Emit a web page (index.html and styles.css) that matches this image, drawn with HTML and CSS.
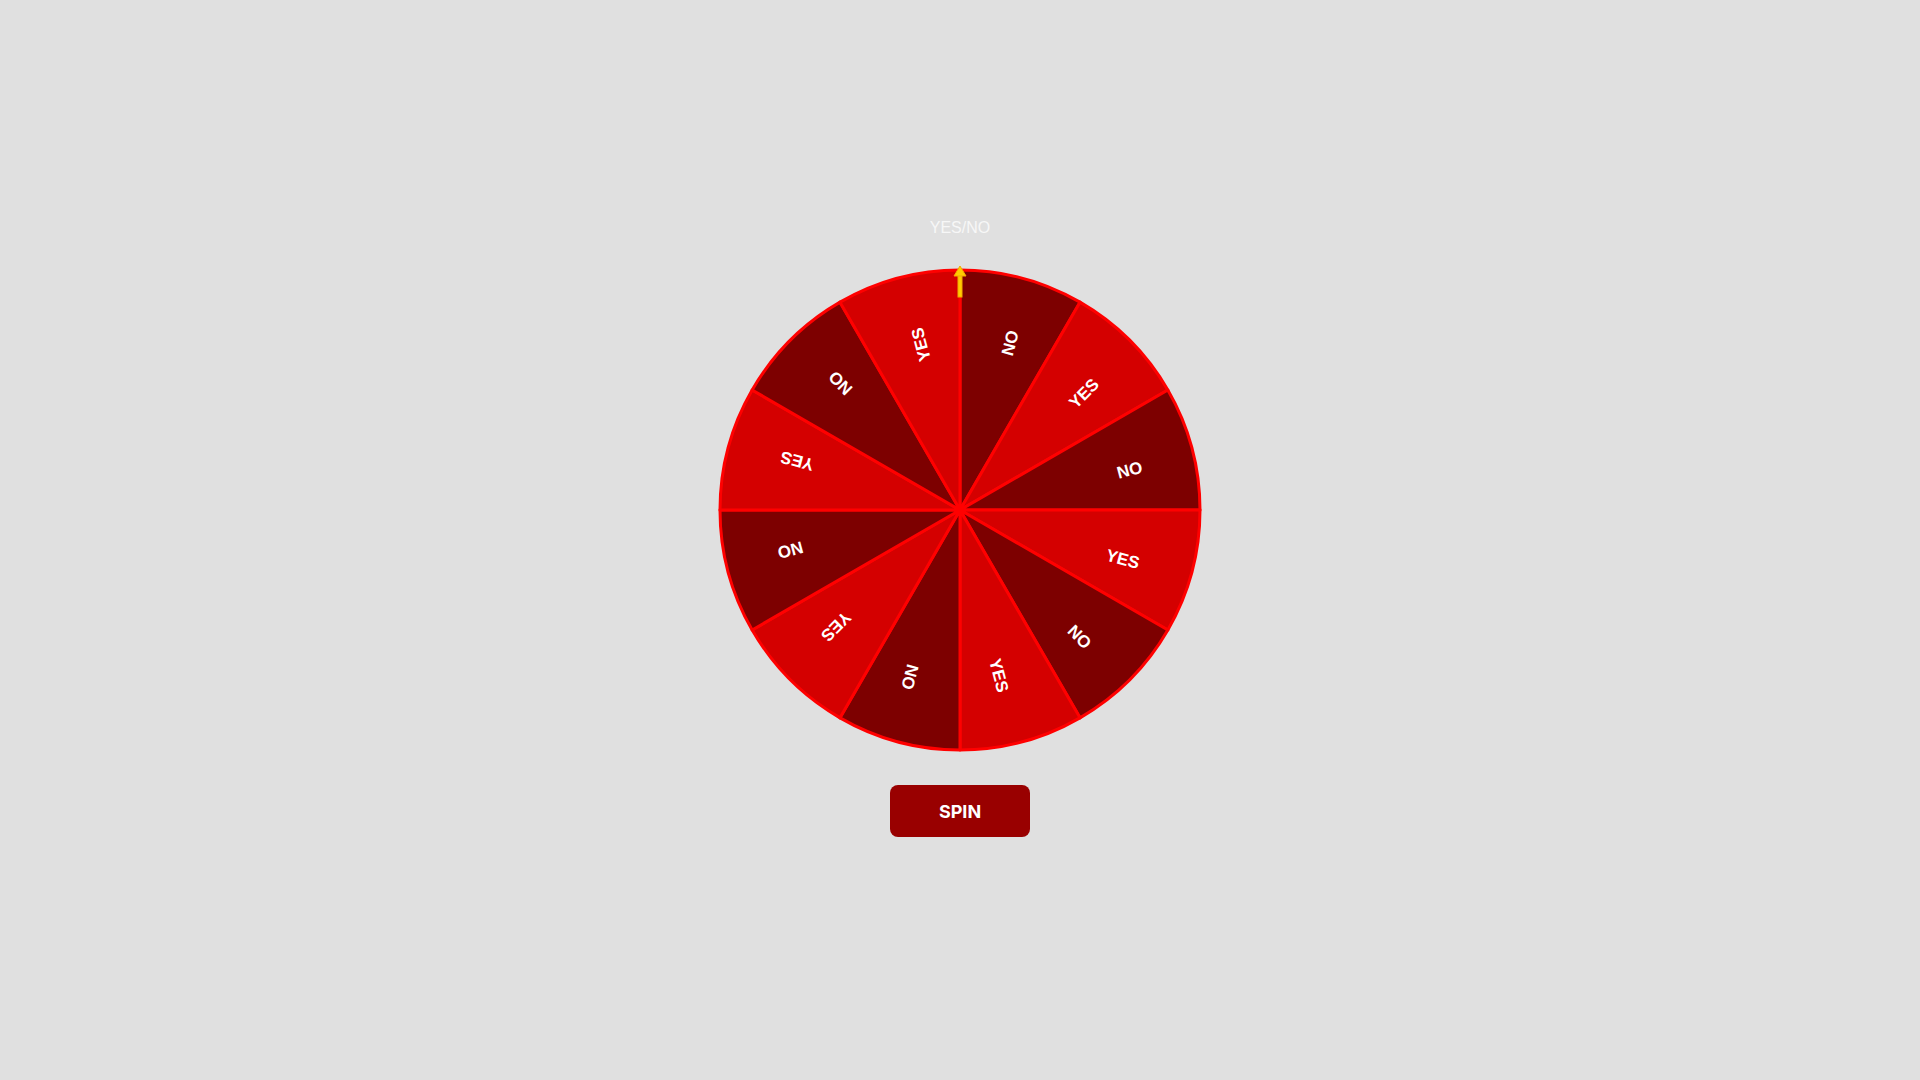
FILE: index.html
```
<!DOCTYPE html>
<html lang="en">

<head>
  <meta charset="UTF-8">
  <meta name="viewport" content="width=device-width, initial-scale=1.0">
  <title>Yes or No Wheel</title>
  <link rel="stylesheet" href="styles.css">
</head>

<body>
  <main class="app">
    <h1 class="title">YES/NO</h1>

    <!-- Roda: 12 fatias de 30 graus, centro em (245,245), raio 240 -->
    <svg class="wheel" width="490" height="490" viewBox="0 0 490 490">
      <g class="slices">
        <path class="dark" d="M245,245 L245,5 A240,240 0 0 1 365,37.15 Z" />
        <path class="light" d="M245,245 L365,37.15 A240,240 0 0 1 452.85,125 Z" />
        <path class="dark" d="M245,245 L452.85,125 A240,240 0 0 1 485,245 Z" />
        <path class="light" d="M245,245 L485,245 A240,240 0 0 1 452.85,365 Z" />
        <path class="dark" d="M245,245 L452.85,365 A240,240 0 0 1 365,452.85 Z" />
        <path class="light" d="M245,245 L365,452.85 A240,240 0 0 1 245,485 Z" />
        <path class="dark" d="M245,245 L245,485 A240,240 0 0 1 125,452.85 Z" />
        <path class="light" d="M245,245 L125,452.85 A240,240 0 0 1 37.15,365 Z" />
        <path class="dark" d="M245,245 L37.15,365 A240,240 0 0 1 5,245 Z" />
        <path class="light" d="M245,245 L5,245 A240,240 0 0 1 37.15,125 Z" />
        <path class="dark" d="M245,245 L37.15,125 A240,240 0 0 1 125,37.15 Z" />
        <path class="light" d="M245,245 L125,37.15 A240,240 0 0 1 245,5 Z" />
      </g>
      <g class="labels">
        <text x="432" y="256" transform="rotate(-75 245 245)">NO</text>
        <text x="432" y="256" transform="rotate(-45 245 245)">YES</text>
        <text x="432" y="256" transform="rotate(-15 245 245)">NO</text>
        <text x="432" y="256" transform="rotate(15 245 245)">YES</text>
        <text x="432" y="256" transform="rotate(45 245 245)">NO</text>
        <text x="432" y="256" transform="rotate(75 245 245)">YES</text>
        <text x="432" y="256" transform="rotate(105 245 245)">NO</text>
        <text x="432" y="256" transform="rotate(135 245 245)">YES</text>
        <text x="432" y="256" transform="rotate(165 245 245)">NO</text>
        <text x="432" y="256" transform="rotate(195 245 245)">YES</text>
        <text x="432" y="256" transform="rotate(225 245 245)">NO</text>
        <text x="432" y="256" transform="rotate(255 245 245)">YES</text>
      </g>
      <!-- ponteiro -->
      <g class="pointer">
        <rect x="243" y="10" width="4" height="22" />
        <polygon points="245,1 239,11 251,11" />
      </g>
    </svg>

    <button class="spin">SPIN</button>
  </main>
</body>

</html>
```

FILE: styles.css
```
* {
  box-sizing: border-box;
  margin: 0;
  padding: 0;
}

body {
  background-color: #e0e0e0;
  font-family: "Liberation Sans", Arial, sans-serif;
}

.app {
  display: flex;
  flex-direction: column;
  align-items: center;
  padding-top: 219px;
}

.title {
  font-size: 16px;
  font-weight: normal;
  line-height: 18px;
  color: #f7f7f7;
}

.wheel {
  display: block;
  margin-top: 28px;
}

.slices path {
  stroke: #ff0000;
  stroke-width: 3;
  stroke-linejoin: round;
}

.dark {
  fill: #7d0000;
}

.light {
  fill: #d40000;
}

.labels text {
  fill: #ffffff;
  font-family: "Liberation Sans", Arial, sans-serif;
  font-weight: bold;
  font-size: 17px;
  text-anchor: end;
}

.pointer {
  fill: #ffcc00;
  stroke: #f2a900;
  stroke-width: 1;
}

.spin {
  margin-top: 30px;
  width: 140px;
  height: 52px;
  border: none;
  border-radius: 8px;
  background-color: #990000;
  color: white;
  font-family: Inter, "Liberation Sans", sans-serif;
  font-weight: bold;
  font-size: 18px;
  cursor: pointer;
}

.spin:hover {
  background-color: #800000;
}
```
